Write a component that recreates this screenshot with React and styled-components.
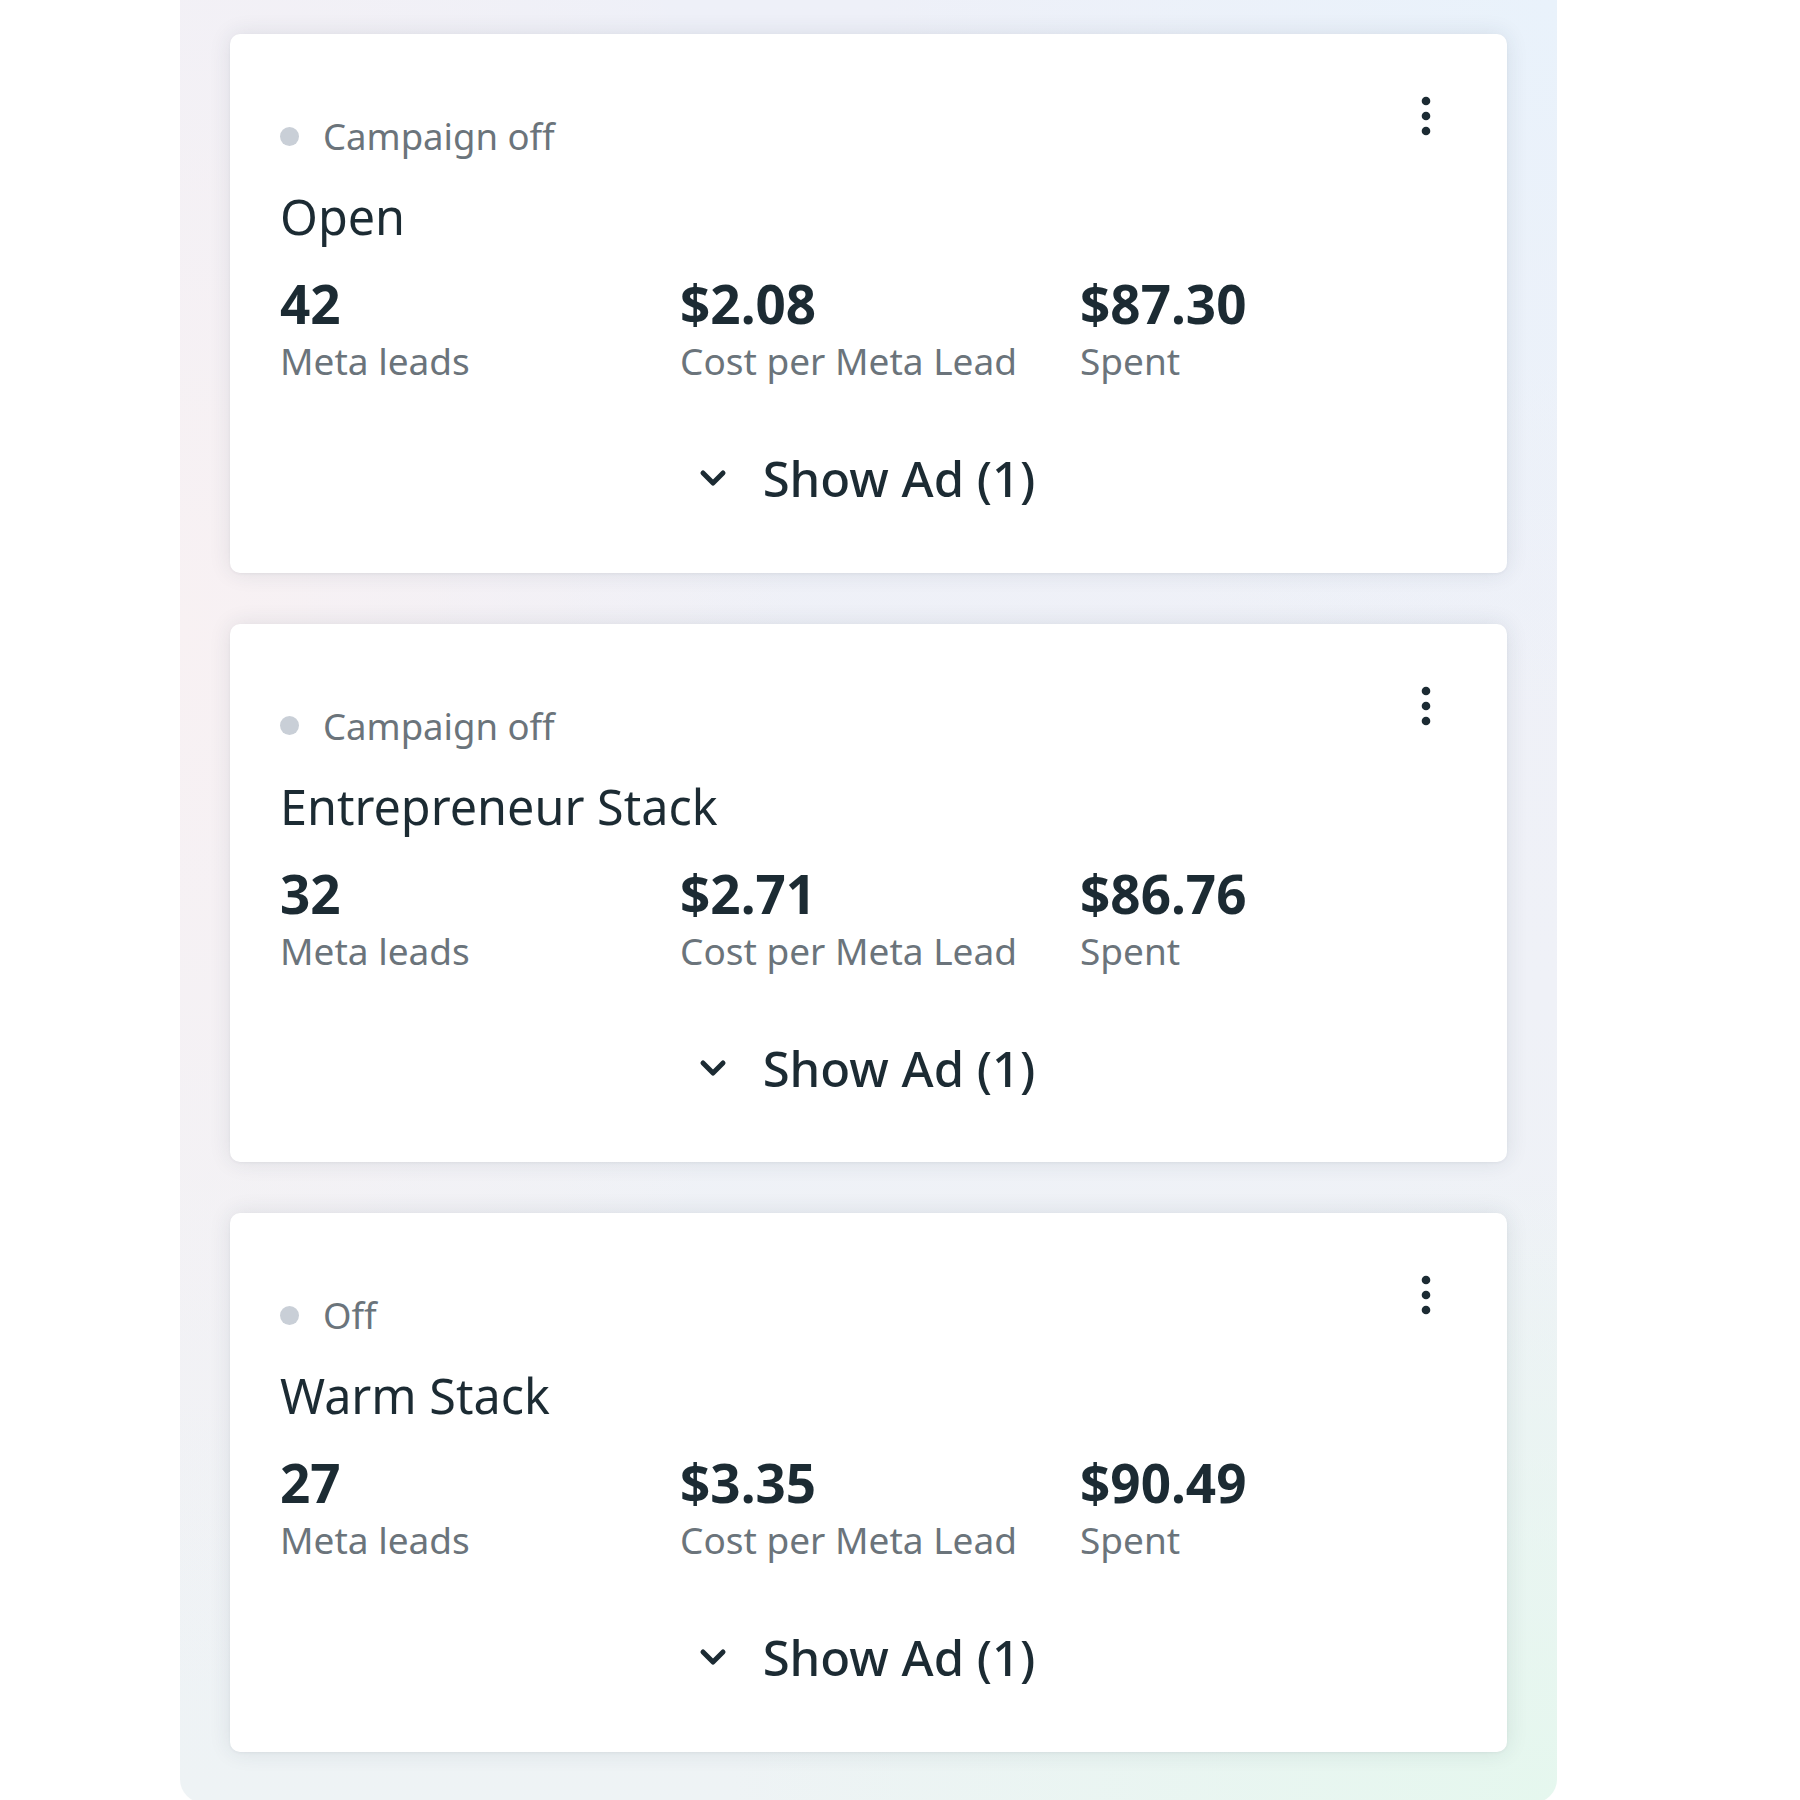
import React from 'react';
import styled, { createGlobalStyle } from 'styled-components';

const GlobalStyle = createGlobalStyle`
    html, body {
        margin: 0;
        padding: 0;
        background: #ffffff;
        font-family: "Noto Sans", "Open Sans", sans-serif;
        -webkit-font-smoothing: antialiased;
    }
`

const Panel = styled.div`
    margin-left: 180px;
    width: 1377px;
    box-sizing: border-box;
    padding: 34px 50px 51px;
    display: flex;
    flex-direction: column;
    gap: 51px;
    border-radius: 0 0 24px 24px;
    background:
        radial-gradient(ellipse 60% 35% at 100% 100%, #e5f7ee 0%, rgba(229,247,238,0) 100%),
        radial-gradient(ellipse 45% 60% at 0% 35%, #f8f1f3 0%, rgba(248,241,243,0) 100%),
        radial-gradient(ellipse 50% 40% at 100% 0%, #e9f2fb 0%, rgba(233,242,251,0) 100%),
        linear-gradient(180deg, #eef0f8 0%, #eff1f7 55%, #eef3f5 100%);
`

const Card = styled.div`
    background: #ffffff;
    border-radius: 10px;
    box-shadow: 0 0 22px rgba(40, 52, 72, 0.11), 0 1px 3px rgba(40, 52, 72, 0.05);
    padding: 62px 61px 64.5px 50px;
    color: #1c2b33;
`

const Header = styled.div`
    display: flex;
    justify-content: space-between;
    align-items: flex-start;
`

const Status = styled.div`
    margin-top: 18px;
    display: flex;
    align-items: center;
    gap: 24px;
    font-size: 36.5px;
    line-height: 44px;
    color: #6b747b;
`

const Dot = styled.span`
    width: 19px;
    height: 19px;
    border-radius: 50%;
    background: ${p => p.color || '#c9cfd7'};
    flex-shrink: 0;
`

const MenuButton = styled.button`
    width: 40px;
    height: 40px;
    padding: 0;
    border: none;
    background: none;
    display: flex;
    align-items: center;
    justify-content: center;
    cursor: pointer;
    color: #1c2b33;
`

const Title = styled.h2`
    margin: 30px 0 0;
    font-size: 48.5px;
    line-height: 56px;
    font-weight: 400;
    color: #1c2b33;
`

const Stats = styled.div`
    margin-top: 33px;
    display: grid;
    grid-template-columns: 400px 400px 1fr;
`

const Stat = styled.div`
    display: flex;
    flex-direction: column;
    gap: 8px;
`

const Value = styled.span`
    font-size: 53px;
    line-height: 54px;
    font-weight: 700;
    color: #1c2b33;
`

const Label = styled.span`
    font-size: 37px;
    line-height: 44px;
    color: #6b747b;
`

const ShowAd = styled.button`
    margin: 65px auto 0;
    padding: 0;
    border: none;
    background: none;
    display: flex;
    align-items: center;
    justify-content: center;
    gap: 34px;
    font-family: inherit;
    font-size: 49px;
    line-height: 60px;
    font-weight: 500;
    color: #1c2b33;
    cursor: pointer;
    position: relative;
    left: 3px;
`

const Kebab = () => (
    <svg width="40" height="40" viewBox="0 0 40 40" fill="currentColor">
        <circle cx="20" cy="5" r="4.3" />
        <circle cx="20" cy="20" r="4.3" />
        <circle cx="20" cy="35" r="4.3" />
    </svg>
)

const Chevron = () => (
    <svg width="32" height="32" viewBox="0 0 32 32" fill="none" stroke="currentColor"
        strokeWidth="5" strokeLinecap="round" strokeLinejoin="round">
        <polyline points="6,11 16,21 26,11" />
    </svg>
)

const campaigns = [
    { status: 'Campaign off', name: 'Open', leads: '42', cpl: '$2.08', spent: '$87.30' },
    { status: 'Campaign off', name: 'Entrepreneur Stack', leads: '32', cpl: '$2.71', spent: '$86.76' },
    { status: 'Off', name: 'Warm Stack', leads: '27', cpl: '$3.35', spent: '$90.49' },
];

const CampaignCard = ({ status, name, leads, cpl, spent }) => (
    <Card>
        <Header>
            <Status><Dot />{status}</Status>
            <MenuButton aria-label="More"><Kebab /></MenuButton>
        </Header>
        <Title>{name}</Title>
        <Stats>
            <Stat><Value>{leads}</Value><Label>Meta leads</Label></Stat>
            <Stat><Value>{cpl}</Value><Label>Cost per Meta Lead</Label></Stat>
            <Stat><Value>{spent}</Value><Label>Spent</Label></Stat>
        </Stats>
        <ShowAd><Chevron />Show Ad (1)</ShowAd>
    </Card>
)

const App = () => (
    <>
        <GlobalStyle />
        <Panel>
            {campaigns.map(c => <CampaignCard key={c.name} {...c} />)}
        </Panel>
    </>
)

export default App;
